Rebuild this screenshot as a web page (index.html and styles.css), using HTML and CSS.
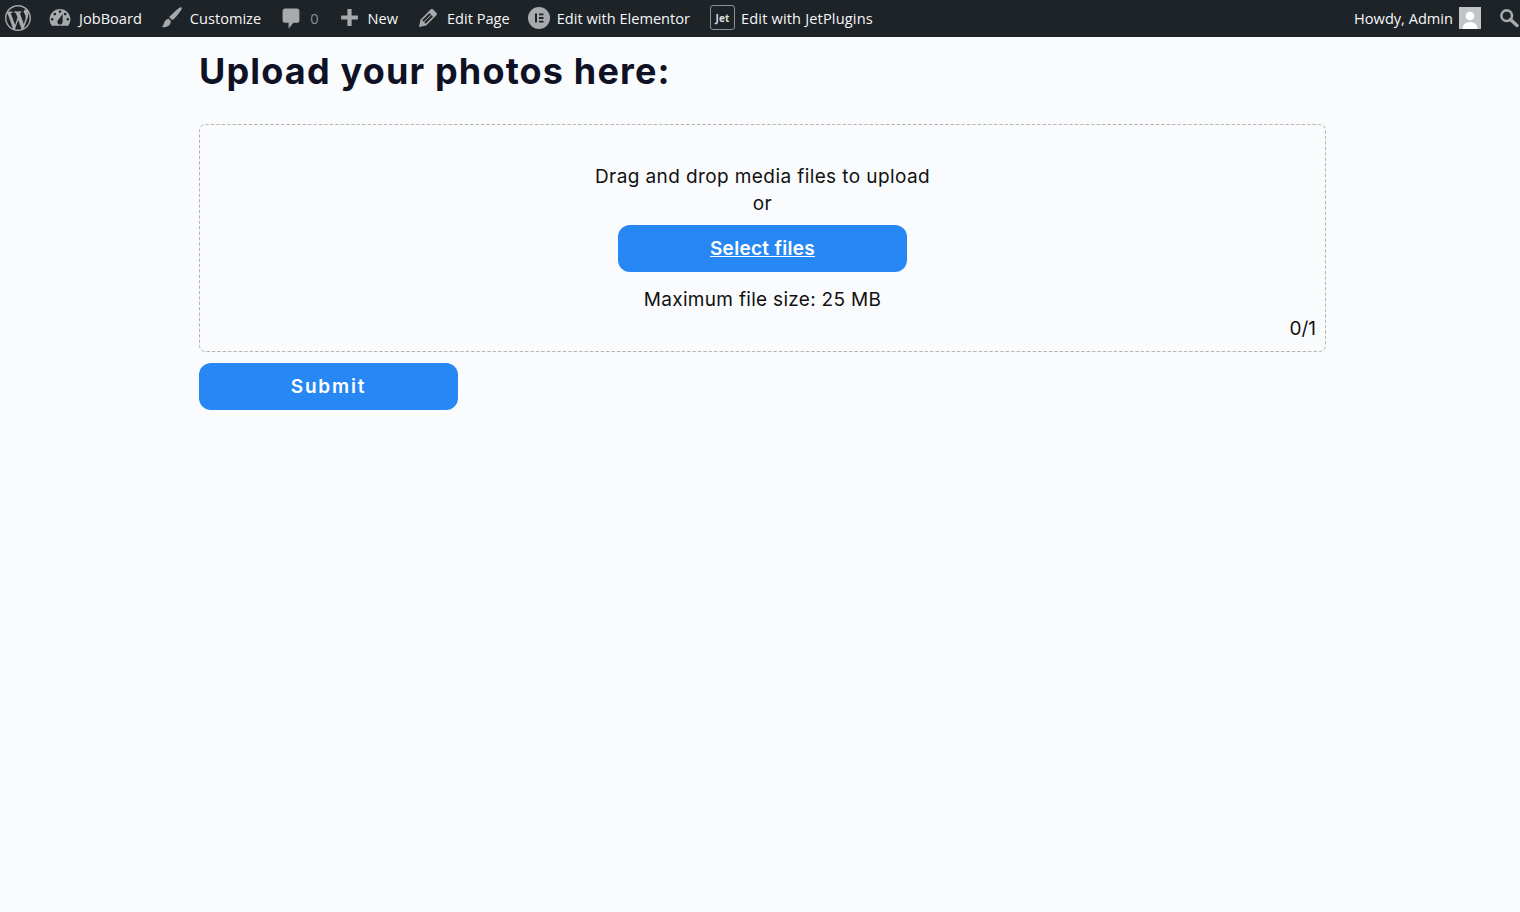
FILE: index.html
```html
<!DOCTYPE html>
<html lang="en">
<head>
<meta charset="utf-8">
<title>Upload your photos</title>
<link rel="stylesheet" href="styles.css">
</head>
<body>
<header class="adminbar">
  <nav class="bar-left">
    <a class="bar-item wp"><svg class="ico ico-wp" viewBox="0 0 20 20"><path d="M20 10c0-5.510-4.490-10-10-10C4.480 0 0 4.490 0 10c0 5.520 4.480 10 10 10 5.510 0 10-4.480 10-10zM7.780 15.370L4.370 6.220c.55-.02 1.170-.08 1.170-.08.5-.06.44-1.130-.06-1.110 0 0-1.450.11-2.370.11-.18 0-.37 0-.58-.01C4.120 2.690 6.870 1.110 10 1.110c2.330 0 4.450.87 6.050 2.340-.68-.11-1.650.39-1.650 1.580 0 .74.45 1.360.9 2.100.35.61.55 1.360.55 2.460 0 1.490-1.400 5-1.400 5l-3.030-8.370c.54-.02.82-.17.82-.17.5-.05.44-1.250-.06-1.220 0 0-1.440.12-2.380.12-.87 0-2.330-.12-2.330-.12-.5-.03-.56 1.200-.06 1.220l.92.08 1.260 3.410zM17.410 10c.24-.64.74-1.870.43-4.250.7 1.290 1.050 2.710 1.050 4.250 0 3.290-1.730 6.240-4.400 7.780.97-2.590 1.940-5.200 2.920-7.780zM6.100 18.090C3.120 16.650 1.110 13.530 1.110 10c0-1.300.23-2.480.72-3.590C3.250 10.300 4.670 14.200 6.100 18.090zm4.030-6.630l2.580 6.980c-.86.29-1.760.45-2.710.45-.79 0-1.570-.11-2.290-.33.81-2.380 1.620-4.740 2.420-7.100z"/></svg></a>
    <a class="bar-item site"><svg class="ico ico-site" viewBox="0 0 20 20"><path fill-rule="evenodd" d="M3.760 16h12.480c1.100-1.370 1.760-3.110 1.760-5 0-4.420-3.580-8-8-8s-8 3.580-8 8c0 1.890.66 3.630 1.760 5zM10 4c.55 0 1 .45 1 1s-.45 1-1 1-1-.45-1-1 .45-1 1-1zM6 6c.55 0 1 .45 1 1s-.45 1-1 1-1-.45-1-1 .45-1 1-1zm8 0c.55 0 1 .45 1 1s-.45 1-1 1-1-.45-1-1 .45-1 1-1zm-5.370 5.550L12 7v6c0 1.100-.9 2-2 2s-2-.9-2-2c0-.57.24-1.080.63-1.450zM4 10c.55 0 1 .45 1 1s-.45 1-1 1-1-.45-1-1 .45-1 1-1zm12 0c.55 0 1 .45 1 1s-.45 1-1 1-1-.45-1-1 .45-1 1-1z"/></svg>JobBoard</a>
    <a class="bar-item customize"><svg class="ico ico-brush" viewBox="0 0 22 22"><path d="M20.500 1.500c.6.5.5 1.300 0 2-1.800 2.600-5 6.900-7.600 9.300-.6.5-1.200.6-1.800.2l-1.700-1.500c-.5-.5-.5-1.100 0-1.700C12 7.400 16 3.700 18.500 1.700c.7-.5 1.400-.7 2-.2z"/><path d="M8.300 12.300l1.900 1.700c.4 1.900-.4 3.700-2 4.800-1.800 1.200-4.300 1.500-6.700 1.400 1.400-.9 1.700-2 2.200-3.500.7-2.200 2.200-4.100 4.600-4.400z"/></svg>Customize</a>
    <a class="bar-item comments"><svg class="ico ico-comment" viewBox="0 0 20 20"><path d="M5 2h10c1.100 0 2 .9 2 2v8c0 1.100-.9 2-2 2h-3l-4 5v-5H5c-1.100 0-2-.9-2-2V4c0-1.100.9-2 2-2z"/></svg><span class="count">0</span></a>
    <a class="bar-item new"><svg class="ico ico-plus" viewBox="0 0 20 20"><path d="M18 8v4h-6v6H8v-6H2V8h6V2h4v6h6z"/></svg>New</a>
    <a class="bar-item edit"><svg class="ico ico-pencil" viewBox="0 0 20 20"><path fill-rule="evenodd" d="M13.890 3.390l2.710 2.720c.46.46.42 1.240.03 1.640l-8.010 8.020-5.560 1.160 1.160-5.580s7.600-7.630 7.990-8.030c.39-.39 1.220-.39 1.680.07zm-2.730 2.790l-5.590 5.610 1.110 1.110 5.540-5.650zm-2.970 8.230l5.580-5.600-1.070-1.080-5.590 5.600z"/></svg>Edit Page</a>
    <a class="bar-item elementor"><svg class="ico ico-el" viewBox="0 0 22 22"><path fill-rule="evenodd" d="M11 0a11 11 0 1 0 0 22 11 11 0 0 0 0-22zM7 6.500h2v9H7zM11 6.500h4.500v1.800H11zM11 10.100h4.500v1.800H11zM11 13.700h4.500v1.800H11z"/></svg>Edit with Elementor</a>
    <a class="bar-item jet"><span class="jet-badge">Jet</span>Edit with JetPlugins</a>
  </nav>
  <div class="bar-right">
    <a class="howdy">Howdy, Admin<span class="avatar"><svg viewBox="0 0 22 22"><rect width="22" height="22" fill="#c3c4c7"/><circle cx="11" cy="9" r="4.300" fill="#fff"/><path d="M3.500 22c.4-4.600 3-7 7.500-7s7.100 2.400 7.500 7z" fill="#fff"/></svg></span></a>
    <a class="search"><svg class="ico ico-search" viewBox="0 0 20 20"><circle cx="7.700" cy="7.700" r="5.300" fill="none" stroke="#a7aaad" stroke-width="2.600"/><path d="M11.500 11.500l6.500 6" stroke="#a7aaad" stroke-width="3.400" stroke-linecap="round"/></svg></a>
  </div>
</header>
<main class="content">
  <h1 class="title">Upload your photos here:</h1>
  <section class="dropzone">
    <svg class="dash" width="1127" height="228"><rect x="0.500" y="0.500" width="1126" height="227" rx="6" fill="none" stroke="#b4b4b4" stroke-width="1" stroke-dasharray="3.400 2"/></svg>
    <p class="drop-text">Drag and drop media files to upload</p>
    <p class="drop-text">or</p>
    <a class="select-btn">Select files</a>
    <p class="max-size">Maximum file size: 25 MB</p>
    <div class="counter">0/1</div>
  </section>
  <button class="submit-btn" type="button">Submit</button>
</main>
</body>
</html>
```

FILE: styles.css
```css
* { box-sizing: border-box; }
html, body { margin: 0; padding: 0; }
body {
  background: #fafbfd;
  color: #111;
  font-family: "Inter", "Liberation Sans", sans-serif;
  min-height: 912px;
}
.adminbar {
  height: 37px;
  padding-bottom: 2px;
  background: #1d2327;
  display: flex;
  justify-content: space-between;
  align-items: center;
  color: #f6f6f7;
  font-family: "Open Sans", "Noto Sans", sans-serif;
  font-size: 14.6px;
}
.bar-left { display: flex; align-items: center; padding-left: 5px; }
.bar-item { display: flex; align-items: center; white-space: nowrap; }
.ico { fill: #a7aaad; display: block; flex: none; }
.ico-wp { width: 26px; height: 26px; }
.wp { margin-right: 16px; }
.ico-site { width: 26px; height: 26px; margin-right: 6px; }
.site { margin-right: 18px; }
.ico-brush { width: 23px; height: 23px; margin-right: 7px; }
.customize { margin-right: 18px; }
.ico-comment { width: 24px; height: 24px; margin-right: 7px; }
.comments { margin-right: 20px; }
.count { color: #8c8f94; }
.ico-plus { width: 21px; height: 21px; margin-right: 8px; }
.new { margin-right: 17px; }
.ico-pencil { width: 26px; height: 26px; margin-right: 6px; }
.edit { margin-right: 18px; }
.ico-el { width: 22px; height: 22px; margin-right: 7px; }
.elementor { margin-right: 20px; }
.jet { letter-spacing: 0.15px; }
.jet-badge {
  width: 25px;
  height: 25px;
  border: 1px solid #8c8f94;
  border-radius: 3px;
  color: #dcdcde;
  font-size: 10px;
  font-weight: 700;
  display: flex;
  align-items: center;
  justify-content: center;
  margin-right: 6px;
}
.bar-right { display: flex; align-items: center; padding-right: 1px; }
.howdy { display: flex; align-items: center; margin-right: 18px; }
.avatar { width: 22px; height: 22px; margin-left: 6px; display: block; }
.avatar svg { display: block; width: 22px; height: 22px; }
.ico-search { width: 20px; height: 20px; }
.content { width: 1127px; margin-left: 199px; }
.title {
  margin: 0;
  padding-top: 11px;
  font-size: 36px;
  line-height: 46px;
  font-weight: 700;
  color: #0f1225;
  letter-spacing: 1.16px;
}
.dropzone {
  position: relative;
  margin-top: 30px;
  height: 228px;
  display: flex;
  flex-direction: column;
  align-items: center;
  padding-top: 39px;
  font-size: 19px;
  color: #111;
}
.dash { position: absolute; left: 0; top: 0; }
.drop-text { margin: 0; line-height: 27px; letter-spacing: 0.4px; }
.select-btn {
  width: 289px;
  height: 47px;
  margin-top: 8px;
  border-radius: 12px;
  background: #2787f5;
  color: #fff;
  font-weight: 600;
  text-decoration: underline;
  letter-spacing: 0.3px;
  display: flex;
  align-items: center;
  justify-content: center;
}
.max-size { margin: 14px 0 0; line-height: 27px; letter-spacing: 0.3px; }
.counter { position: absolute; right: 10px; bottom: 10px; line-height: 27px; }
.submit-btn {
  display: block;
  margin-top: 11px;
  width: 259px;
  height: 47px;
  border: 0;
  border-radius: 12px;
  background: #2787f5;
  color: #fff;
  font-family: inherit;
  font-size: 19px;
  font-weight: 600;
  letter-spacing: 1.8px;
}
```
